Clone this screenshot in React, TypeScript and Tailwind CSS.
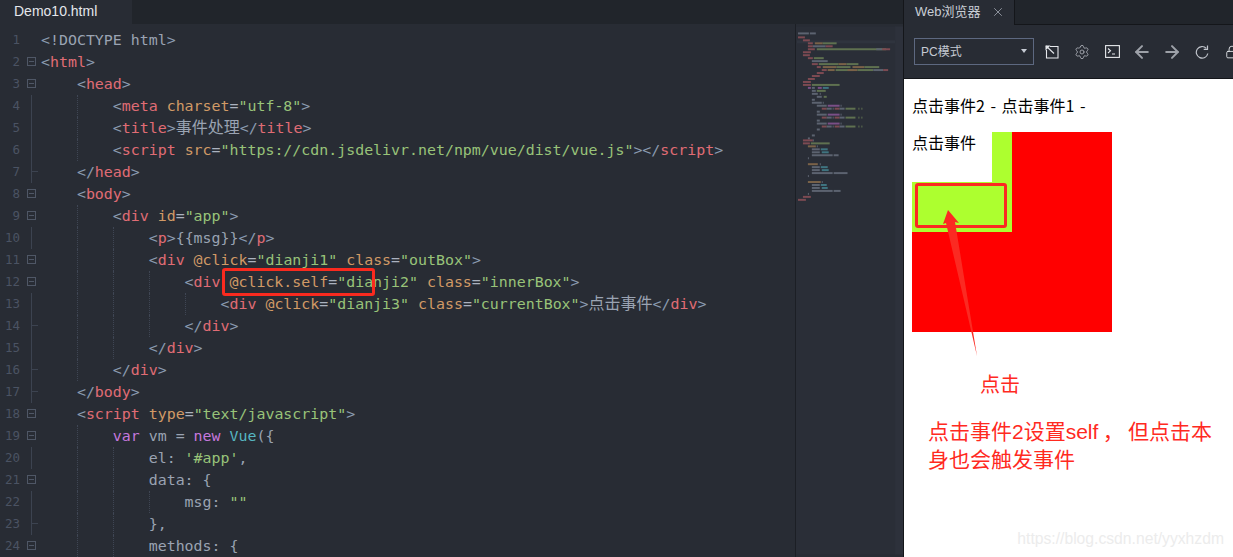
import React from "react";
import { ArrowLeft, ArrowRight, Lock, Settings, X } from "lucide-react";

type T = [string, string];
const P = "#8b9bb0", R = "#e06c75", O = "#d19a66", G = "#98c379", W = "#abb2bf", V = "#c678dd", C = "#56b6c2", D = "#9aa3b2";
const lt = P;

const lines: { t: T[]; guides: number[]; fold?: boolean; tree?: "v" | "t" }[] = [
  { t: [[lt, "<"], [D, "!DOCTYPE html"], [lt, ">"]], guides: [] },
  { t: [[lt, "<"], [R, "html"], [lt, ">"]], guides: [], fold: true },
  { t: [["", "    "], [lt, "<"], [R, "head"], [lt, ">"]], guides: [], fold: true },
  { t: [["", "        "], [lt, "<"], [R, "meta"], ["", " "], [O, "charset"], [W, "="], [G, "\"utf-8\""], [lt, ">"]], guides: [77], tree: "v" },
  { t: [["", "        "], [lt, "<"], [R, "title"], [lt, ">"], [D, "事件处理"], [lt, "</"], [R, "title"], [lt, ">"]], guides: [77], tree: "v" },
  { t: [["", "        "], [lt, "<"], [R, "script"], ["", " "], [O, "src"], [W, "="], [G, "\"https://cdn.jsdelivr.net/npm/vue/dist/vue.js\""], [lt, ">"], [lt, "</"], [R, "script"], [lt, ">"]], guides: [77], tree: "v" },
  { t: [["", "    "], [lt, "</"], [R, "head"], [lt, ">"]], guides: [], tree: "t" },
  { t: [["", "    "], [lt, "<"], [R, "body"], [lt, ">"]], guides: [], fold: true },
  { t: [["", "        "], [lt, "<"], [R, "div"], ["", " "], [O, "id"], [W, "="], [G, "\"app\""], [lt, ">"]], guides: [77], fold: true },
  { t: [["", "            "], [lt, "<"], [R, "p"], [lt, ">"], [D, "{{msg}}"], [lt, "</"], [R, "p"], [lt, ">"]], guides: [77, 113], tree: "v" },
  { t: [["", "            "], [lt, "<"], [R, "div"], ["", " "], [O, "@click"], [W, "="], [G, "\"dianji1\""], ["", " "], [O, "class"], [W, "="], [G, "\"outBox\""], [lt, ">"]], guides: [77, 113], fold: true },
  { t: [["", "                "], [lt, "<"], [R, "div"], ["", " "], [O, "@click.self"], [W, "="], [G, "\"dianji2\""], ["", " "], [O, "class"], [W, "="], [G, "\"innerBox\""], [lt, ">"]], guides: [77, 113, 149], fold: true },
  { t: [["", "                    "], [lt, "<"], [R, "div"], ["", " "], [O, "@click"], [W, "="], [G, "\"dianji3\""], ["", " "], [O, "class"], [W, "="], [G, "\"currentBox\""], [lt, ">"], [D, "点击事件"], [lt, "</"], [R, "div"], [lt, ">"]], guides: [77, 113, 149, 185], tree: "v" },
  { t: [["", "                "], [lt, "</"], [R, "div"], [lt, ">"]], guides: [77, 113, 149], tree: "t" },
  { t: [["", "            "], [lt, "</"], [R, "div"], [lt, ">"]], guides: [77, 113], tree: "v" },
  { t: [["", "        "], [lt, "</"], [R, "div"], [lt, ">"]], guides: [77], tree: "t" },
  { t: [["", "    "], [lt, "</"], [R, "body"], [lt, ">"]], guides: [], tree: "t" },
  { t: [["", "    "], [lt, "<"], [R, "script"], ["", " "], [O, "type"], [W, "="], [G, "\"text/javascript\""], [lt, ">"]], guides: [], fold: true },
  { t: [["", "        "], [V, "var"], [D, " vm = "], [V, "new"], ["", " "], [C, "Vue"], [D, "({"]], guides: [77], fold: true },
  { t: [["", "            "], [D, "el: "], [G, "'#app'"], [D, ","]], guides: [77, 113], tree: "v" },
  { t: [["", "            "], [D, "data: {"]], guides: [77, 113], fold: true },
  { t: [["", "                "], [D, "msg: "], [G, "\"\""]], guides: [77, 113, 149], tree: "v" },
  { t: [["", "            "], [D, "},"]], guides: [77, 113], tree: "t" },
  { t: [["", "            "], [D, "methods: {"]], guides: [77, 113], fold: true },
];

const mini: [number, number, number, string][] = [
  [797,30,11,"#5c6370"],[809,30,6,"#5c6370"],[797,34,7,"#7d4a52"],[802,37,7,"#7d4a52"],
  [807,40,5,"#7d4a52"],[814,40,8,"#7a6248"],[822,40,14,"#5f7150"],
  [807,43,5,"#7d4a52"],[812,43,13,"#5c6370"],[825,43,7,"#7d4a52"],
  [807,46,7,"#7d4a52"],[816,46,70,"#5f7150"],[876,46,6,"#5c6370"],[882,46,8,"#7d4a52"],
  [802,49,8,"#7d4a52"],[802,52,7,"#7d4a52"],[807,55,5,"#7d4a52"],[813,55,10,"#5f7150"],
  [811,58,16,"#5c6370"],[811,61,6,"#7d4a52"],[818,61,20,"#5f7150"],[838,61,8,"#7a6248"],[846,61,12,"#5f7150"],
  [816,64,4,"#7d4a52"],[822,64,14,"#7a6248"],[836,64,14,"#5f7150"],[852,64,12,"#7a6248"],[864,64,15,"#5f7150"],
  [821,67,5,"#7d4a52"],[827,67,7,"#7a6248"],[835,67,18,"#5f7150"],[847,67,10,"#7a6248"],[857,67,16,"#5f7150"],[873,67,10,"#5c6370"],[883,67,5,"#7d4a52"],
  [816,70,7,"#7d4a52"],[811,73,8,"#7d4a52"],[807,76,7,"#7d4a52"],[802,79,8,"#7d4a52"],
  [802,82,8,"#7d4a52"],[811,82,28,"#5f7150"],[807,85,3,"#7a4f87"],[811,85,3,"#5c6370"],[817,85,4,"#7a4f87"],[822,85,6,"#3f7480"],
  [811,88,4,"#5c6370"],[816,88,9,"#5f7150"],[811,91,6,"#5c6370"],[819,91,1,"#5c6370"],[816,94,5,"#5c6370"],[823,94,3,"#5f7150"],
  [811,97,3,"#5c6370"],[811,100,10,"#5c6370"],[822,100,1,"#5c6370"],
  [816,103,10,"#5c6370"],[827,103,12,"#7a4f87"],[840,103,1,"#5c6370"],[821,106,5,"#7d4a52"],[826,106,5,"#5c6370"],[832,106,1,"#5c6370"],[834,106,5,"#7d4a52"],[839,106,5,"#5c6370"],[845,106,10,"#5f7150"],[858,106,1,"#5f7150"],[861,106,1,"#5f7150"],
  [816,109,3,"#5c6370"],
  [816,112,10,"#5c6370"],[827,112,12,"#7a4f87"],[840,112,1,"#5c6370"],[821,115,5,"#7d4a52"],[826,115,5,"#5c6370"],[832,115,1,"#5c6370"],[834,115,5,"#7d4a52"],[839,115,5,"#5c6370"],[845,115,10,"#5f7150"],[858,115,1,"#5f7150"],[861,115,1,"#5f7150"],
  [816,118,3,"#5c6370"],
  [816,121,10,"#5c6370"],[827,121,12,"#7a4f87"],[840,121,1,"#5c6370"],[821,124,5,"#7d4a52"],[826,124,5,"#5c6370"],[832,124,1,"#5c6370"],[834,124,5,"#7d4a52"],[839,124,5,"#5c6370"],[845,124,10,"#5f7150"],[858,124,1,"#5f7150"],[861,124,1,"#5f7150"],
  [816,127,3,"#5c6370"],[811,133,3,"#5c6370"],[807,136,2,"#5c6370"],
  [802,138,10,"#7d4a52"],[812,138,1,"#5c6370"],[802,141,7,"#7d4a52"],[810,141,19,"#5f7150"],
  [807,144,8,"#7a6248"],[816,144,1,"#5c6370"],[811,147,8,"#5c6370"],[820,147,7,"#3f7480"],[811,150,8,"#5c6370"],[821,150,7,"#3f7480"],[811,153,21,"#5c6370"],[833,153,5,"#5c6370"],[807,156,1,"#5c6370"],
  [807,162,10,"#7a6248"],[819,162,1,"#5c6370"],[811,165,8,"#5c6370"],[820,165,7,"#3f7480"],[811,168,8,"#5c6370"],[821,168,7,"#3f7480"],[811,171,21,"#5c6370"],[833,171,14,"#5c6370"],[807,174,1,"#5c6370"],
  [807,180,13,"#7a6248"],[821,180,1,"#5c6370"],[811,183,8,"#5c6370"],[820,183,6,"#3f7480"],[811,186,8,"#5c6370"],[821,186,6,"#3f7480"],[811,189,21,"#5c6370"],[833,189,7,"#5c6370"],[807,192,1,"#5c6370"],
  [802,195,8,"#7d4a52"],[797,198,8,"#7d4a52"],
];

const mono = "font-['DejaVu_Sans_Mono','Noto_Sans_CJK_SC',monospace]";

function CodeLine({ n, line }: { n: number; line: (typeof lines)[number] }) {
  return (
    <div className="relative flex h-[22px] items-center text-[14.92px] leading-[22px]">
      <span className="w-[20px] shrink-0 text-right text-[12.5px] text-[#4b5363]">{n}</span>
      <span className="relative h-full w-[21px] shrink-0">
        {line.fold && <span className="absolute left-[7px] top-[6px] h-[9px] w-[9px] border border-[#4f5766]"><span className="absolute left-[1px] top-[3px] h-px w-[5px] bg-[#4f5766]" /></span>}
        {line.tree && <span className="absolute left-[11px] top-0 h-full w-px bg-[#3c4350]" />}
        {line.tree === "t" && <span className="absolute left-[11px] top-[10px] h-px w-[7px] bg-[#3c4350]" />}
      </span>
      {line.guides.map((g) => (
        <span key={g} className="absolute top-0 h-full border-l border-dotted border-[#3f4654]" style={{ left: g }} />
      ))}
      <span className="relative whitespace-pre">
        {line.t.map(([c, s], i) => (
          <span key={i} className={/[\u4e00-\u9fff]/.test(s) ? "text-[16px]" : undefined} style={{ color: c || undefined }}>{s}</span>
        ))}
      </span>
    </div>
  );
}

function Editor() {
  return (
    <div className="flex w-[904px] shrink-0 flex-col border-r border-[#14161a]">
      <div className="flex h-6 shrink-0 bg-[#21252b]">
        <div className="flex w-[132px] items-center bg-[#282c34] pb-[2px] pl-[14px] font-['Liberation_Sans',sans-serif] text-[14px] text-[#e4e7ec]">Demo10.html</div>
      </div>
      <div className="flex min-h-0 flex-1 bg-[#282c34]">
        <div className={`relative w-[795px] shrink-0 overflow-hidden pt-[5px] ${mono}`}>
          {lines.map((l, i) => <CodeLine key={i} n={i + 1} line={l} />)}
          <div className="absolute left-[222px] top-[244px] h-[28px] w-[153px] rounded-[3px] border-[3px] border-[#f92a1f]" />
        </div>
        <svg className="h-full flex-1 border-l border-[#1c1f25]" viewBox="795 24 108 533">
          <rect x="795" y="24" width="108" height="533" fill="#2a2e37" />
          <rect x="895" y="24" width="8" height="533" fill="#2d313b" />
          <rect x="796" y="38" width="99" height="3" fill="#2f343e" />
          {mini.map(([x, y, w, c], i) => <rect key={i} x={x} y={y} width={w} height="2" fill={c} />)}
        </svg>
      </div>
    </div>
  );
}

function ToolIcon({ children }: { children: React.ReactNode }) {
  return <span className="flex w-[30px] shrink-0 items-center justify-center text-[#e6e8ec]">{children}</span>;
}

function Browser() {
  return (
    <div className="flex min-w-0 flex-1 flex-col overflow-hidden">
      <div className="flex h-[25px] shrink-0 border-b border-[#14161a] bg-[#21252b]">
        <div className="-mb-px flex w-[111px] items-center border-r border-[#14161a] bg-[#282c34] pb-[2px] pl-[11px] font-['Liberation_Sans','Noto_Sans_CJK_SC',sans-serif] text-[13px] text-[#c9ced6]">
          Web浏览器
          <X size={14} strokeWidth={1.3} className="ml-[10px] text-[#aab0ba]" />
        </div>
      </div>
      <div className="flex h-[54px] shrink-0 items-center border-b border-[#14161a] bg-[#282c34] pl-[10px]">
        <div className="relative flex h-[27px] w-[120px] shrink-0 items-center border border-[#5d6880] pl-[6px] font-['Liberation_Sans','Noto_Sans_CJK_SC',sans-serif] text-[12px] text-[#c5cad3]">
          PC模式
          <span className="absolute right-[6px] top-[10px] h-0 w-0 border-x-[3.5px] border-t-[4px] border-x-transparent border-t-[#c5cad3]" />
        </div>
        <div className="ml-[3px] flex">
          <ToolIcon>
            <svg width="14" height="14" viewBox="0 0 14 14" fill="none" stroke="currentColor" strokeWidth="1.1"><path d="M5 1.5H13V13H1.5V5" /><path d="M1 1L9 8.5" /><path d="M.5.5h5L.5 5.5z" fill="currentColor" stroke="none" /></svg>
          </ToolIcon>
          <ToolIcon><Settings size={16} strokeWidth={1.3} className="text-[#a9adb5]" /></ToolIcon>
          <ToolIcon>
            <svg width="15" height="13" viewBox="0 0 15 13" fill="none" stroke="currentColor" strokeWidth="1.1"><rect x=".6" y=".6" width="13.8" height="11.8" /><path d="M3 3.5L5.5 5.8 3 8M7 9h3" /></svg>
          </ToolIcon>
          <ToolIcon><ArrowLeft size={20} strokeWidth={2.4} className="text-[#9da1a8]" /></ToolIcon>
          <ToolIcon><ArrowRight size={20} strokeWidth={2.4} className="text-[#9da1a8]" /></ToolIcon>
          <ToolIcon>
            <svg width="14" height="14" viewBox="0 0 14 14" fill="none" stroke="#c0c4cb" strokeWidth="1.2"><path d="M11.3 3.3A5.8 5.8 0 1 0 12.8 8.5" /><path d="M12.5.5v3.8H8.7" /></svg>
          </ToolIcon>
          <ToolIcon><Lock size={14} strokeWidth={1.5} /></ToolIcon>
        </div>
      </div>
      <div className="relative min-h-0 flex-1 bg-white px-2 font-['Noto_Sans_CJK_SC',sans-serif] text-[16px] text-black">
        <p className="flex h-[53px] items-center whitespace-pre pb-[2px] [word-spacing:2px]">点击事件2 - 点击事件1 -</p>
        <div className="h-[200px] w-[200px] bg-[#ff0000]">
          <div className="h-[100px] w-[100px] bg-[#adff2f]">
            <div className="h-[50px] w-[80px] bg-white leading-[20px]">点击事件</div>
          </div>
        </div>
        <div className="absolute left-[11px] top-[104px] h-[45px] w-[92px] rounded-[3px] border-[3px] border-[#fb2a22]" />
        <svg className="absolute left-[30px] top-[128px]" width="50" height="152" viewBox="0 0 50 152">
          <path d="M14 3L9 17l3-1L43 149 21 15l4 1z" fill="#fb2a22" />
        </svg>
        <div className="absolute left-[76px] top-[293px] text-[20px] leading-[24px] text-[#ff2a1f]">点击</div>
        <div className="absolute left-[24px] top-[339px] w-[290px] font-['Liberation_Sans','Noto_Sans_CJK_SC',sans-serif] text-[21px] leading-[28px] text-[#ff2a1f] [word-spacing:-1.5px]">点击事件2设置self ， 但点击本身也会触发事件</div>
        <div className="absolute right-[9px] top-[448px] font-['Liberation_Sans',sans-serif] text-[15.7px] text-[#ececec]">https://blog.csdn.net/yyxhzdm</div>
      </div>
    </div>
  );
}

export default function App() {
  return (
    <div className="flex h-[557px] w-[1233px] overflow-hidden bg-[#282c34]">
      <Editor />
      <Browser />
    </div>
  );
}
